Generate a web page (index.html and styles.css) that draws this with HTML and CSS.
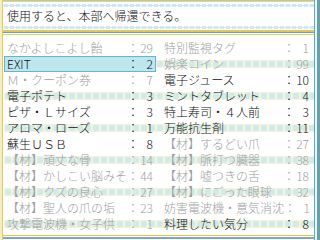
FILE: index.html
```html
<!DOCTYPE html>
<html lang="ja">
<head>
  <meta charset="UTF-8">
  <title>アイテム</title>
  <link rel="stylesheet" href="styles.css">
</head>
<body>
  <div class="frame">

    <!-- description of the selected item -->
    <div class="message">使用すると、本部へ帰還できる。</div>
    <div class="rule"></div>

    <!-- item list: two columns -->
    <div class="list">
      <div class="row">
        <div class="item off"><span class="name">なかよしこよし飴</span><span class="colon">：</span><span class="num">29</span></div>
        <div class="item off"><span class="name">特別監視タグ</span><span class="colon">：</span><span class="num">1</span></div>
      </div>
      <div class="row">
        <div class="item sel"><span class="name">EXIT</span><span class="colon">：</span><span class="num">2</span></div>
        <div class="item off"><span class="name">娯楽コイン</span><span class="colon">：</span><span class="num">99</span></div>
      </div>
      <div class="row">
        <div class="item off"><span class="name">Ｍ・クーポン券</span><span class="colon">：</span><span class="num">7</span></div>
        <div class="item"><span class="name">電子ジュース</span><span class="colon">：</span><span class="num">10</span></div>
      </div>
      <div class="row">
        <div class="item"><span class="name">電子ポテト</span><span class="colon">：</span><span class="num">3</span></div>
        <div class="item"><span class="name">ミントタブレット</span><span class="colon">：</span><span class="num">4</span></div>
      </div>
      <div class="row">
        <div class="item"><span class="name">ピザ・Ｌサイズ</span><span class="colon">：</span><span class="num">3</span></div>
        <div class="item"><span class="name">特上寿司・４人前</span><span class="colon">：</span><span class="num">3</span></div>
      </div>
      <div class="row">
        <div class="item"><span class="name">アロマ・ローズ</span><span class="colon">：</span><span class="num">1</span></div>
        <div class="item"><span class="name">万能抗生剤</span><span class="colon">：</span><span class="num">11</span></div>
      </div>
      <div class="row">
        <div class="item"><span class="name">蘇生ＵＳＢ</span><span class="colon">：</span><span class="num">8</span></div>
        <div class="item off"><span class="name">【材】するどい爪</span><span class="colon">：</span><span class="num">27</span></div>
      </div>
      <div class="row">
        <div class="item off"><span class="name">【材】頑丈な骨</span><span class="colon">：</span><span class="num">14</span></div>
        <div class="item off"><span class="name">【材】脈打つ臓器</span><span class="colon">：</span><span class="num">38</span></div>
      </div>
      <div class="row">
        <div class="item off"><span class="name">【材】かしこい脳みそ</span><span class="colon">：</span><span class="num">44</span></div>
        <div class="item off"><span class="name">【材】嘘つきの舌</span><span class="colon">：</span><span class="num">18</span></div>
      </div>
      <div class="row">
        <div class="item off"><span class="name">【材】クズの良心</span><span class="colon">：</span><span class="num">27</span></div>
        <div class="item off"><span class="name">【材】にごった眼球</span><span class="colon">：</span><span class="num">32</span></div>
      </div>
      <div class="row">
        <div class="item off"><span class="name">【材】聖人の爪の垢</span><span class="colon">：</span><span class="num">23</span></div>
        <div class="item off"><span class="name">妨害電波機・意気消沈</span><span class="colon">：</span><span class="num">1</span></div>
      </div>
      <div class="row">
        <div class="item off"><span class="name">攻撃電波機・女子供</span><span class="colon">：</span><span class="num">1</span></div>
        <div class="item"><span class="name">料理したい気分</span><span class="colon">：</span><span class="num">8</span></div>
      </div>
    </div>
    <div class="rule bottom"></div>

  </div>
</body>
</html>
```

FILE: styles.css
```css
html, body {
  margin: 0;
  padding: 0;
  width: 320px;
  height: 240px;
  overflow: hidden;
  background: #fff;
}

/* window with yellow edge on the left, teal edge on the right */
.frame {
  box-sizing: border-box;
  width: 320px;
  height: 240px;
  padding: 0 6px 0 3px;
  display: flex;
  flex-direction: column;
  font-family: "Noto Sans CJK JP", "DejaVu Sans", sans-serif;
  font-size: 12px;
  font-weight: 300;
  color: #101010;
  background:
    linear-gradient(to right, #f6eec3 0 2px, #e8c85a 2px 3px, transparent 3px),
    linear-gradient(to left, #6c9ea7 0 3px, #eaf5f6 3px 5px, #5ea9b8 5px 6px, transparent 6px),
    #fff;
}

/* top message box, with wavy dots along top and bottom */
.message {
  height: 28px;
  border-top: 1px solid #e6c452;
  padding: 1px 0 0 4px;
  box-sizing: content-box;
  display: flex;
  align-items: center;
  line-height: 14px;
  background:
    linear-gradient(#b6dde4, #b6dde4) 0 0 / 100% 1px no-repeat,
    radial-gradient(3px 1.5px at 3px 1.5px, #cae9f3 95%, transparent 100%) 0 3px / 6px 3px repeat-x,
    radial-gradient(3px 1.5px at 3px 1.5px, #cae9f3 95%, transparent 100%) 0 25px / 6px 3px repeat-x;
}

/* double rule between the boxes */
.rule {
  height: 5px;
  background: linear-gradient(#e6c452 0 2px, #62a9b8 2px 3px, #fff 3px 4px, #ecd06c 4px 5px);
}
.rule.bottom {
  height: 7px;
  background: linear-gradient(#fff 0 2px, #e6c452 2px 3px, #fff 3px 4px, #7fa8b0 4px 6px, #fff 6px);
}

.list {
  flex: 1;
  padding: 5px 0 0 1px;
}

.row {
  display: grid;
  grid-template-columns: 152px 1fr;
  height: 16px;
  line-height: 16px;
}
/* every other row has a striped band behind it */
.row:nth-child(even) {
  background:
    radial-gradient(3px 3.5px at 4px 4px, #cdebf5 95%, transparent 100%) 0 50% / 8px 8px repeat-x,
    linear-gradient(#f8f2d0, #f8f2d0) 0 50% / 100% 8px no-repeat;
}

.item {
  display: flex;
  padding: 0 3px;
  white-space: nowrap;
}
.item + .item {
  padding: 0 5px 0 8px;
}
.item .name {
  flex: 1;
  overflow: hidden;
}
.item .colon {
  width: 12px;
}
.item .num {
  width: 14px;
  text-align: right;
}

/* items that can't be used here */
.item.off {
  color: #a0a0a0;
}

/* cursor */
.item.sel {
  background: #bde6ee;
  box-shadow: inset 0 0 0 1px #68b5c5;
}
```
